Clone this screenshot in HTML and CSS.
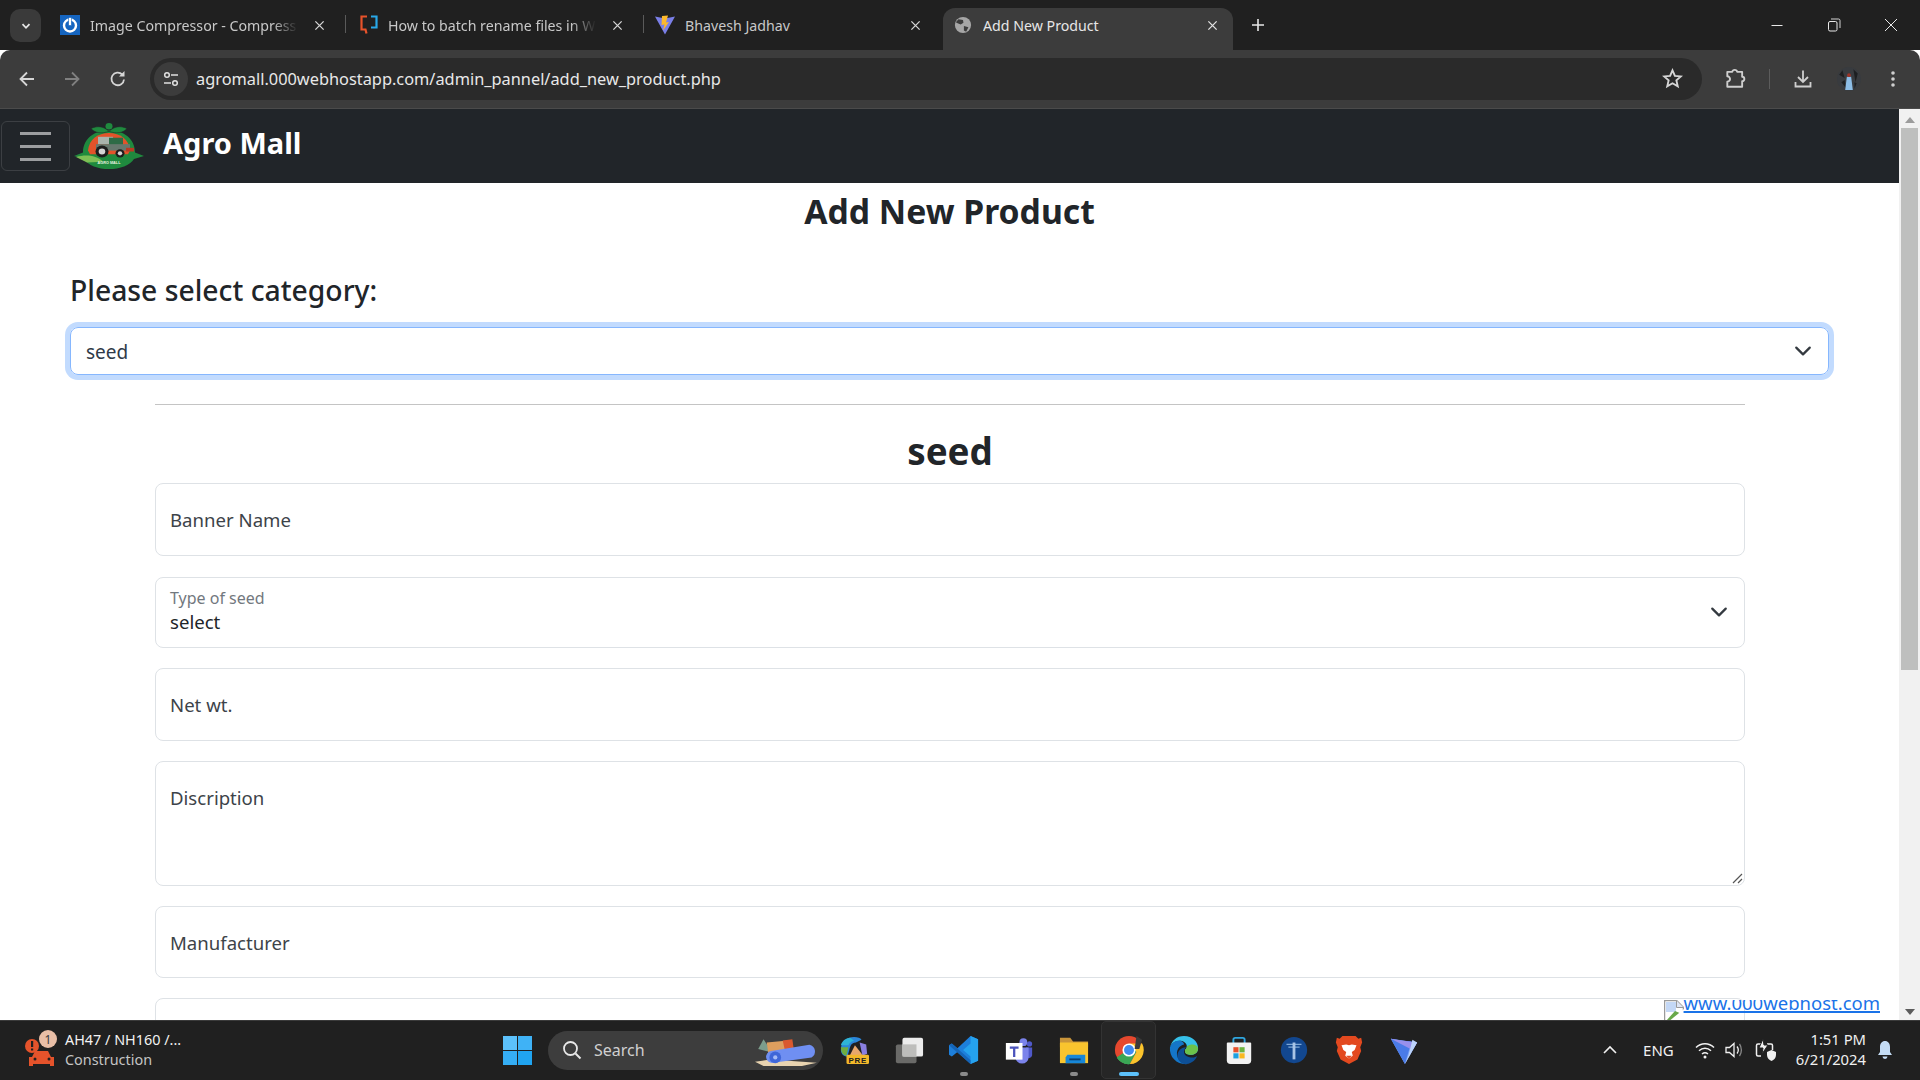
FILE: index.html
```html
<!DOCTYPE html>
<html lang="en">
<head>
<meta charset="utf-8">
<title>Add New Product</title>
<link rel="stylesheet" href="styles.css">
</head>
<body>
<div class="tabstrip">
  <div class="tablist-btn"><svg width="12" height="12" viewBox="0 0 12 12"><path d="M2.5 4.2 6 7.8l3.5-3.6" fill="none" stroke="#e6e6e6" stroke-width="1.8"/></svg></div>
  <div class="tab">
    <svg class="favicon" viewBox="0 0 20 20"><rect width="20" height="20" fill="#1565c0"/><circle cx="10" cy="10.5" r="6" fill="none" stroke="#fff" stroke-width="2.4"/><rect x="8.6" y="2.5" width="2.8" height="8" fill="#fff" stroke="#1565c0" stroke-width=".6"/></svg>
    <span class="tab-title">Image Compressor - Compress</span>
    <svg class="tab-close" viewBox="0 0 12 12"><path d="M1.5 1.5l9 9M10.5 1.5l-9 9" stroke="#d8d8d8" stroke-width="1.4"/></svg>
    <i class="tab-sep"></i>
  </div>
  <div class="tab tab-2">
    <svg class="favicon" viewBox="0 0 20 20"><path d="M8 1.5H2.5v13h4l1 4" fill="none" stroke="#e8532b" stroke-width="2.2"/><path d="M12 1.5h5.5v11H12" fill="none" stroke="#29a8e8" stroke-width="2.2"/></svg>
    <span class="tab-title">How to batch rename files in W</span>
    <svg class="tab-close" viewBox="0 0 12 12"><path d="M1.5 1.5l9 9M10.5 1.5l-9 9" stroke="#d8d8d8" stroke-width="1.4"/></svg>
    <i class="tab-sep"></i>
  </div>
  <div class="tab tab-3">
    <svg class="favicon" viewBox="0 0 20 20"><path d="M0 1.5l10 2 10-2L10 19.5z" fill="#7a7fe8"/><path d="M7 1l6-.5-2 7 3-.5-6 8.5 1.500-6-3 .5z" fill="#fdb92c"/></svg>
    <span class="tab-title">Bhavesh Jadhav</span>
    <svg class="tab-close" viewBox="0 0 12 12"><path d="M1.5 1.5l9 9M10.5 1.500l-9 9" stroke="#d8d8d8" stroke-width="1.4"/></svg>
  </div>
  <div class="tab tab-active">
    <svg class="favicon" viewBox="0 0 20 20"><circle cx="10" cy="10" r="9" fill="#a6a6a6"/><path d="M5 3.500l5 1 .5 3-3 2-3.500-1.500-2-1zM11 11l5 1.500-2.500 5-2.500-1.500z" fill="#3c3c3c"/></svg>
    <span class="tab-title">Add New Product</span>
    <svg class="tab-close" viewBox="0 0 12 12"><path d="M1.5 1.5l9 9M10.5 1.5l-9 9" stroke="#e4e4e4" stroke-width="1.4"/></svg>
  </div>
  <svg class="new-tab" viewBox="0 0 14 14"><path d="M7 1v12M1 7h12" stroke="#e6e6e6" stroke-width="1.6"/></svg>
  <div class="window-controls">
    <svg class="win-btn" viewBox="0 0 14 14"><path d="M1.500 7.500h11" stroke="#e8e8e8" stroke-width="1"/></svg>
    <svg class="win-btn" viewBox="0 0 14 14"><rect x="1.500" y="3.500" width="8.500" height="9.500" rx="1.500" fill="none" stroke="#e8e8e8"/><path d="M4 1h7.500a1.500 1.500 0 0 1 1.500 1.500V10" fill="none" stroke="#e8e8e8" stroke-width=".9"/></svg>
    <svg class="win-btn" viewBox="0 0 14 14"><path d="M1 1l12 12M13 1L1 13" stroke="#e8e8e8"/></svg>
  </div>
</div>

<div class="toolbar">
  <svg class="tb-icon tb-back" viewBox="0 0 20 20"><path d="M17 10H4M10 3.500 3.500 10l6.500 6.500" fill="none" stroke="#d6d6d6" stroke-width="1.800"/></svg>
  <svg class="tb-icon tb-forward" viewBox="0 0 20 20"><path d="M3 10h13M10 3.500l6.500 6.500-6.500 6.500" fill="none" stroke="#808080" stroke-width="1.800"/></svg>
  <svg class="tb-icon tb-reload" viewBox="0 0 20 20"><path d="M16 10.500a6.300 6.300 0 1 1-1.800-5" fill="none" stroke="#d6d6d6" stroke-width="1.800"/><path d="M16.500 2v5.500H11z" fill="#d6d6d6"/></svg>
  <div class="omnibox">
    <div class="site-chip"><svg width="18" height="18" viewBox="0 0 18 18"><circle cx="5" cy="5" r="2.300" fill="none" stroke="#e0e0e0" stroke-width="1.500"/><path d="M9 5h7M2 13h7" stroke="#e0e0e0" stroke-width="1.600"/><circle cx="13" cy="13" r="2.300" fill="none" stroke="#e0e0e0" stroke-width="1.500"/></svg></div>
    <span class="url">agromall.000webhostapp.com/admin_pannel/add_new_product.php</span>
    <svg class="star" viewBox="0 0 20 20"><path d="M10 2.200l2.300 5.300 5.700.5-4.300 3.800 1.300 5.600L10 14.500l-5 2.900 1.300-5.600L2 8l5.700-.5z" fill="none" stroke="#d6d6d6" stroke-width="1.800"/></svg>
  </div>
  <svg class="tb-icon tb-ext" viewBox="0 0 20 20"><path d="M3 3.500h4.500a2.300 2.300 0 0 1 4.500 0H16.500V8a2 2 0 0 1 0 4v5H3v-4.500a2.500 2.500 0 0 0 0-5z" fill="none" stroke="#cfcfcf" stroke-width="1.700" stroke-linejoin="round"/></svg>
  <i class="tb-sep"></i>
  <svg class="tb-icon tb-dl" viewBox="0 0 20 20"><path d="M10 1.500v11M5 8l5 5 5-5" fill="none" stroke="#cfcfcf" stroke-width="1.800"/><path d="M2.500 13v4.500h15V13" fill="none" stroke="#cfcfcf" stroke-width="1.800"/></svg>
  <svg class="avatar" viewBox="0 0 22 22"><circle cx="11" cy="11" r="11" fill="#383b3f"/><path d="M2 7l3-4 2 7zM15 2l4 4-2 8zM4 14l3-2 1 7zM16 14l2 1-2 5z" fill="#1d1f21"/><path d="M9 9h4l1.500 12h-7z" fill="#8cbde6"/><circle cx="11" cy="7.500" r="1.700" fill="#9c3328"/></svg>
  <svg class="tb-icon tb-menu" viewBox="0 0 20 20"><circle cx="10" cy="4" r="1.800" fill="#cfcfcf"/><circle cx="10" cy="10" r="1.800" fill="#cfcfcf"/><circle cx="10" cy="16" r="1.800" fill="#cfcfcf"/></svg>
</div>

<div class="viewport">
  <div class="page">
    <nav class="navbar">
      <div class="hamburger"><i></i><i></i><i></i></div>
      <svg class="logo" viewBox="0 0 70 50" preserveAspectRatio="none">
        <path d="M0 36 9 32C9 17 21 8 35 8s26 9 26 24l9 4-10 3C56 46 46 50 35 50S14 46 10 39z" fill="#1f8a3e"/>
        <path d="M35 9C29 3 23 3 17 6c4 5 11 6 18 3zM35 9c6-6 12-6 18-3-4 5-11 6-18 3z" fill="#1f8a3e" stroke="#212529" stroke-width=".6"/>
        <circle cx="35" cy="3.500" r="3.500" fill="#1f8a3e"/>
        <path d="M14 30C15 18 24 11 35 11s20 7 21 19l-2 4H16z" fill="#e2532a"/>
        <path d="M2 37c10-3 20-2 27 5l-16 1z" fill="#7dbf55"/>
        <rect x="24" y="15" width="15" height="8" fill="#a9b3ac"/>
        <rect x="35" y="16" width="14" height="10" fill="#2e6b46"/>
        <rect x="22" y="23" width="34" height="7" fill="#67786e"/>
        <rect x="52" y="27" width="8" height="4" fill="#b93a24"/>
        <circle cx="28" cy="31" r="6.500" fill="#1d1d1d"/><circle cx="28" cy="31" r="3.300" fill="#d4d4d4"/>
        <circle cx="46" cy="33" r="4.500" fill="#1d1d1d"/><circle cx="46" cy="33" r="2.200" fill="#d4d4d4"/>
        <text x="35" y="45" font-size="3.800" font-weight="700" fill="#e8f3e0" text-anchor="middle" font-family="Liberation Sans, sans-serif">AGRO MALL</text>
      </svg>
      <span class="brand">Agro Mall</span>
    </nav>
    <main class="content">
      <h2 class="page-title">Add New Product</h2>
      <h3 class="cat-label">Please select category:</h3>
      <div class="cat-select">
        <span>seed</span>
        <svg class="chev" viewBox="0 0 16 16"><path d="M2 5l6 6 6-6" fill="none" stroke="#343a40" stroke-width="2" stroke-linecap="round" stroke-linejoin="round"/></svg>
      </div>
      <hr class="rule">
      <form class="product-form">
        <h2 class="form-title">seed</h2>
        <div class="field">Banner Name</div>
        <div class="field field-select">
          <div class="field-select-text"><small>Type of seed</small><span>select</span></div>
          <svg class="chev" viewBox="0 0 16 16"><path d="M2 5l6 6 6-6" fill="none" stroke="#343a40" stroke-width="2" stroke-linecap="round" stroke-linejoin="round"/></svg>
        </div>
        <div class="field">Net wt.</div>
        <div class="field field-area">Discription
          <svg class="resizer" viewBox="0 0 12 12"><path d="M11 2 2 11M11 7l-4 4" stroke="#555" stroke-width="1.200"/></svg>
        </div>
        <div class="field field-short">Manufacturer</div>
        <div class="field"></div>
      </form>
    </main>
    <div class="host-badge">
      <svg class="broken" viewBox="0 0 20 22"><path d="M.5.5h12l7 7v14H.5z" fill="#fff" stroke="#9a9a9a" stroke-width="1.500"/><path d="M12.500.5v7h7" fill="#dfe6f5" stroke="#9a9a9a"/><path d="M2 2h10v10H2z" fill="#c4d8f6"/><path d="M2 21l9-10 7 3v7z" fill="#67a84a"/><path d="M4 22 20 9v13z" fill="#fff"/></svg>
      <a class="host-link" href="#">www.000webhost.com</a>
    </div>
  </div>
  <div class="scrollbar">
    <svg class="sb-arrow" viewBox="0 0 10 6"><path d="M5 0l5 6H0z" fill="#9c9c9c"/></svg>
    <div class="sb-track"><div class="sb-thumb"></div></div>
    <svg class="sb-arrow" viewBox="0 0 10 6"><path d="M5 6 0 0h10z" fill="#5c5c5c"/></svg>
  </div>
</div>

<footer class="taskbar">
  <div class="widget">
    <svg class="widget-icon" viewBox="0 0 34 38">
      <circle cx="7" cy="16" r="7" fill="#e5532b"/><rect x="6" y="11" width="2.200" height="6" fill="#202020"/><rect x="6" y="18.500" width="2.200" height="2" fill="#202020"/>
      <path d="M7 27l3-6h13l3 6h3v9h-4v-2H8v2H4v-9z" fill="#e5532b"/><circle cx="10" cy="29" r="1.500" fill="#202020"/><circle cx="24" cy="29" r="1.500" fill="#202020"/>
      <circle cx="23" cy="9" r="9" fill="#e9bea6"/><text x="23" y="13.500" font-size="12" fill="#3a3a3a" text-anchor="middle" font-family="Noto Sans, sans-serif">1</text>
    </svg>
    <div class="widget-text"><span class="w1">AH47 / NH160 /...</span><span class="w2">Construction</span></div>
  </div>
  <svg class="start" viewBox="0 0 29 29"><path d="M0 0h14v14H0z" fill="#5cc1fb"/><path d="M15 0h14v14H15z" fill="#3fb2f6"/><path d="M0 15h14v14H0z" fill="#35aef5"/><path d="M15 15h14v14H15z" fill="#20a4f0"/></svg>
  <div class="search">
    <svg class="search-glass" viewBox="0 0 20 20"><circle cx="8.500" cy="8.500" r="6.500" fill="none" stroke="#e8e8e8" stroke-width="1.800"/><path d="M13.500 13.500l5 5" stroke="#e8e8e8" stroke-width="2"/></svg>
    <span class="search-text">Search</span>
    <svg class="search-art" viewBox="0 0 60 30"><path d="M0 26l14-2 44 3-14 3H8z" fill="#e8d3b0"/><path d="M3 14l5-9 4 6 3 6z" fill="#7c9d8c"/><path d="M11 8l20-2 3 14-21 2z" fill="#dd9e5e"/><path d="M26 6l9-1 2 14-8 1z" fill="#d9582e"/><path d="M15 16 51 10a6.500 6.500 0 0 1 2 12l-36 5a5.500 5.500 0 0 1-2-11z" fill="#6f8ff2"/><circle cx="19" cy="22" r="5.500" fill="#3f66d8"/><circle cx="19" cy="22" r="2" fill="#a6bbf6"/></svg>
  </div>
  <div class="pinned">
    <div class="pin"><svg viewBox="0 0 32 32"><path d="M2 16C2 6 9 2 16 2c4 0 7 1 8 3l-6 3c-5 0-6 4-7 8l-2 7c-4 0-7-3-7-7z" fill="#2b86d9"/><path d="M2 11c1-4 5-8 10-8l4 3c-4 1-5 3-6 5z" fill="#2fb4d6"/><path d="M2 13h8l-2 9c-3 0-6-3-6-9z" fill="#6fae3f"/><path d="M22 8l7 2 1 10-5 2z" fill="#8a7fe0"/><path d="M11 23l6-12 8 10z" fill="#e8a86c"/><rect x="8" y="21" width="24" height="10" rx="1.500" fill="#f3b82a"/><text x="20" y="29.500" font-size="8.500" font-weight="700" fill="#202020" text-anchor="middle" font-family="Liberation Sans, sans-serif" letter-spacing=".8">PRE</text></svg></div>
    <div class="pin"><svg viewBox="0 0 32 32"><rect x="2" y="10" width="22" height="20" rx="2" fill="#6a6a68"/><rect x="9" y="3" width="22" height="20" rx="2" fill="#ececec"/><rect x="9" y="10" width="15" height="13" fill="#bdbdbb"/></svg></div>
    <div class="pin pin-open"><svg viewBox="0 0 32 32"><path d="M23 1l8 3.500v23L23 31 9 18l-6 5-3-2v-10l3-2 6 5z" fill="#1d7fdb"/><path d="M23 1l8 3.500v23L23 31zM23 9l-8 7 8 7z" fill="#25a2ee" fill-rule="evenodd"/><path d="M3 9l20 18v4L0 11z" fill="#1565b8"/></svg></div>
    <div class="pin"><svg class="teams" viewBox="0 0 32 32"><circle cx="21" cy="7" r="4.500" fill="#7b83eb"/><circle cx="28" cy="9" r="3" fill="#5059c9"/><path d="M24 13h7v9a4 4 0 0 1-7 2z" fill="#5059c9"/><path d="M12 13h15v11a7 7 0 0 1-15 0z" fill="#7b83eb"/><rect x="1" y="8" width="19" height="19" fill="#fff"/><path d="M5.500 12h10v2.500h-3.700V24H9.200v-9.500H5.500z" fill="#4b53bc"/></svg></div>
    <div class="pin pin-open"><svg viewBox="0 0 32 32"><path d="M1 3h11l3 4h16v6H1z" fill="#c9953a"/><path d="M1 8h30v22H1z" fill="#f9c42e"/><path d="M7 30v-6l2-3h19v9z" fill="#1787d8"/><path d="M11 25h12v2H11z" fill="#0b3f70"/></svg></div>
    <div class="pin pin-active"><svg viewBox="0 0 32 32"><circle cx="16" cy="16" r="15" fill="#e5482e"/><path d="M16 16 3 24a15 15 0 0 0 14 7z" fill="#3aa655"/><path d="M3 24a15 15 0 0 0 14 7l8-15 6-1a15 15 0 0 1 0 2l-1-2H16z" fill="#3aa655"/><path d="M16 9h14a15 15 0 0 1-13 22l7-13z" fill="#fbc42c"/><circle cx="16" cy="16" r="7" fill="#fff"/><circle cx="16" cy="16" r="5.300" fill="#3f8bf0"/><path d="M24 1l6 4-3 10h-5z" fill="#3a3a3a"/></svg></div>
    <div class="pin"><svg viewBox="0 0 32 32"><path d="M16 1c9 0 15 6 15 13 0 5-4 7-8 7-3 0-6-1-6-4 0-2 2-2 2-5 0-4-4-6-8-6-5 0-9 4-10 7C3 6 8 1 16 1z" fill="#36c0e9"/><path d="M31 14c0 5-4 7-8 7-3 0-6-1-6-4 0-2 2-2 2-5 5-3 11-2 12 2z" fill="#6cc24a"/><path d="M1 13C3 8 7 6 11 6c3 0 5 2 5 4-5 1-9 6-7 13 1 4 6 8 11 8C9 32 0 24 1 13z" fill="#1476c8"/><path d="M9 22c0-5 4-9 9-9-1 2-2 3-2 5 0 4 5 6 9 6 2 0 4-1 5-2-2 6-8 9-13 9-5-1-8-5-8-9z" fill="#0d4f96"/></svg></div>
    <div class="pin"><svg viewBox="0 0 32 32"><path d="M10 9V5a2 2 0 0 1 2-2h8a2 2 0 0 1 2 2v4" fill="none" stroke="#2fa6df" stroke-width="2"/><path d="M4 8h24a1 1 0 0 1 1 1v18a4 4 0 0 1-4 4H7a4 4 0 0 1-4-4V9a1 1 0 0 1 1-1z" fill="#f2f2f2"/><rect x="10" y="13" width="5.500" height="5.500" fill="#e6522c"/><rect x="16.500" y="13" width="5.500" height="5.500" fill="#6cb33f"/><rect x="10" y="19.500" width="5.500" height="5.500" fill="#1ba1e2"/><rect x="16.500" y="19.500" width="5.500" height="5.500" fill="#f8b81f"/></svg></div>
    <div class="pin"><svg viewBox="0 0 32 32"><circle cx="16" cy="16" r="14" fill="#12478f"/><path d="M8 10h16M10 13h12" stroke="#7fa9d6" stroke-width="1.300"/><path d="M14.500 8h3v18h-3z" fill="#a8c4e6"/></svg></div>
    <div class="pin"><svg viewBox="0 0 32 32"><path d="M9 1h14l3 3 3-1 1 5-2 5 1 4-4 9-9 5-9-5-4-9 1-4-2-5 1-5 3 1z" fill="#e3491f"/><path d="M8 11l5-1 3 1 3-1 5 1-2 5-3 2 1 4-4 3-4-3 1-4-3-2z" fill="#fff"/><path d="M13 22h6l-3 3z" fill="#e3491f"/></svg></div>
    <div class="pin"><svg viewBox="0 0 32 32"><path d="M2 4 30 8 17 31z" fill="#7da4f5"/><path d="M2 4 14 6l10 1-7 24z" fill="#4a7be8"/><path d="M2 4l13 2 15 2-5 8z" fill="#9890ec"/><path d="M25 5l5 3-13 23 4-10z" fill="#bcd3fb"/></svg></div>
  </div>
  <div class="tray">
    <svg class="tray-chev" viewBox="0 0 14 10"><path d="M1 8l6-6 6 6" fill="none" stroke="#f0f0f0" stroke-width="1.600"/></svg>
    <span class="lang">ENG</span>
    <svg class="tray-ic tray-wifi" viewBox="0 0 20 18"><path d="M1 6.500C6 1.500 14 1.500 19 6.500M4 9.800c3.500-3.300 8.500-3.300 12 0M7 13c1.800-1.500 4.200-1.500 6 0" fill="none" stroke="#f0f0f0" stroke-width="1.500"/><circle cx="10" cy="16" r="1.500" fill="#f0f0f0"/></svg>
    <svg class="tray-ic tray-vol" viewBox="0 0 18 18"><path d="M1 6.500h3.500L9 2.500v13l-4.500-4H1z" fill="none" stroke="#f0f0f0" stroke-width="1.300"/><path d="M12 5.500c1.500 2 1.500 5 0 7" fill="none" stroke="#f0f0f0" stroke-width="1.300"/><path d="M14.500 3c2.500 3.500 2.500 8.500 0 12" fill="none" stroke="#888" stroke-width="1.300"/></svg>
    <svg class="tray-ic tray-bat" viewBox="0 0 22 22"><path d="M6 5H3a1.500 1.500 0 0 0-1.500 1.500v9A1.500 1.500 0 0 0 3 17h3M12 5h4a1.500 1.500 0 0 1 1.500 1.500V11" fill="none" stroke="#f0f0f0" stroke-width="1.500"/><path d="M8 0 4 9h4l-1 6 6-9H9z" fill="#f0f0f0" stroke="#202020"/><path d="M12 13l4.500-2 4.500 2v3c0 3-2 5-4.500 6-2.500-1-4.500-3-4.500-6z" fill="#f0f0f0"/></svg>
    <div class="clock"><span>1:51 PM</span><span>6/21/2024</span></div>
    <svg class="bell" viewBox="0 0 14 20"><path d="M7 1c3 0 5 2.500 5 6v5l2 3H0l2-3V7c0-3.500 2-6 5-6z" fill="#c4dcf5"/><path d="M4.500 16.500h5a2.500 2.500 0 0 1-5 0z" fill="#c4dcf5"/></svg>
  </div>
</footer>
</body>
</html>
```

FILE: styles.css
```css
* { box-sizing: border-box; }
html, body { margin: 0; height: 100%; overflow: hidden; }
body {
  display: flex;
  flex-direction: column;
  height: 1080px;
  background: #fff;
  font-family: "Noto Sans", "Open Sans", sans-serif;
  color: #212529;
}

/* browser tab strip */
.tabstrip {
  display: flex;
  align-items: flex-start;
  height: 50px;
  padding: 8px 0 0 10px;
  background: #202020;
  flex: none;
}
.tablist-btn {
  width: 31px;
  height: 33px;
  margin: 1px 7px 0 0;
  border-radius: 10px;
  background: #3a3a3a;
  display: flex;
  align-items: center;
  justify-content: center;
}
.tab {
  position: relative;
  display: flex;
  align-items: center;
  width: 298px;
  height: 42px;
  padding: 0 21px 8px 12px;
  color: #c8c8c8;
  font-size: 14.200px;
}
.tab-2 { padding-left: 13px; }
.tab-2 .favicon { margin-right: 9px; }
.tab-3 { padding-left: 11px; }
.favicon { width: 20px; height: 20px; flex: none; margin-right: 10px; }
.tab-title {
  flex: 1;
  white-space: nowrap;
  overflow: hidden;
  margin-right: 16px;
  -webkit-mask-image: linear-gradient(to right, #000 88%, transparent 100%);
  mask-image: linear-gradient(to right, #000 88%, transparent 100%);
}
.tab-3 .tab-title, .tab-active .tab-title { -webkit-mask-image: none; mask-image: none; }
.tab-close { width: 11px; height: 11px; flex: none; }
.tab-sep {
  position: absolute;
  right: 0;
  top: 7px;
  width: 1px;
  height: 18px;
  background: #5a5a5a;
}
.tab-active {
  width: 290px;
  margin-left: 1px;
  padding-left: 11px;
  padding-right: 15px;
  background: #3c3c3c;
  border-radius: 12px 12px 0 0;
  color: #e6e6e6;
}
.tab-active .favicon { width: 18px; height: 18px; margin-right: 11px; }
.new-tab { width: 14px; height: 14px; margin: 10px 0 0 18px; flex: none; }
.window-controls {
  margin-left: auto;
  display: flex;
  gap: 43px;
  padding: 10px 22px 0 0;
}
.win-btn { width: 14px; height: 14px; }

/* browser toolbar */
.toolbar {
  display: flex;
  align-items: center;
  height: 59px;
  padding: 0 17px 1px 17px;
  background: #3c3c3c;
  border-bottom: 1px solid #4b4b4b;
  border-radius: 10px 10px 0 0;
  flex: none;
}
.tb-icon { width: 20px; height: 20px; flex: none; }
.tb-forward { margin-left: 25px; }
.tb-reload { margin-left: 26px; }
.omnibox {
  display: flex;
  align-items: center;
  width: 1552px;
  height: 42px;
  margin-left: 22px;
  padding: 0 19px 0 4px;
  border-radius: 21px;
  background: #2a2a2a;
  flex: none;
}
.site-chip {
  width: 34px;
  height: 34px;
  border-radius: 50%;
  background: #3c3c3c;
  display: flex;
  align-items: center;
  justify-content: center;
  flex: none;
}
.url { margin: 1px 0 0 8px; font-size: 16.350px; color: #e8e8e8; flex: 1; white-space: nowrap; }
.star { width: 21px; height: 21px; flex: none; }
.tb-ext { width: 22px; height: 22px; margin-left: 22px; }
.tb-sep { width: 1px; height: 20px; background: #5c5c5c; margin-left: 23px; flex: none; }
.tb-dl { margin-left: 23px; }
.avatar { width: 24px; height: 24px; margin-left: 24px; flex: none; }
.tb-menu { margin-left: 22px; }

/* page viewport */
.viewport { flex: 1; min-height: 0; display: flex; }
.page { position: relative; flex: 1; min-width: 0; overflow: hidden; }
.navbar {
  display: flex;
  align-items: center;
  height: 74px;
  padding-left: 1px;
  background: #212529;
}
.hamburger {
  width: 69px;
  height: 50px;
  border: 1px solid rgba(255,255,255,.12);
  border-radius: 6px;
  display: flex;
  flex-direction: column;
  justify-content: center;
  align-items: center;
  gap: 10px;
}
.hamburger i { display: block; width: 31px; height: 3px; background: #9c9ea0; }
.logo { width: 70px; height: 46px; margin: -1px 0 0 4px; flex: none; }
.brand { margin: -8px 0 0 19px; color: #fff; font-size: 29px; font-weight: 700; }

.content { padding: 0 70px; }
.page-title { margin: 0; padding-top: 5px; text-align: center; font-size: 33.700px; line-height: 46px; font-weight: 700; }
.cat-label { margin: 36px 0 0; font-size: 28.300px; line-height: 40px; font-weight: 500; }
.cat-select {
  display: flex;
  align-items: center;
  justify-content: space-between;
  height: 48px;
  margin-top: 17px;
  padding: 0 16px 0 15px;
  border: 1px solid #86b7fe;
  border-radius: 8px;
  box-shadow: 0 0 0 5px #c2dbfe;
  font-size: 19px;
  color: #2f3a48;
}
.cat-select span { margin-top: 2px; }
.chev { width: 18px; height: 18px; flex: none; }
.rule { height: 1px; margin: 29px 84px 0 85px; border: 0; background: #c4c4c4; }

.product-form { display: flex; flex-direction: column; gap: 20px; margin: 0 84px 0 85px; }
.form-title { margin: 20px 0 -14px; text-align: center; font-size: 36.800px; line-height: 52px; font-weight: 700; }
.field {
  position: relative;
  flex: none;
  display: flex;
  align-items: center;
  height: 73px;
  padding: 0 15px 0 14px;
  border: 1px solid #dee2e6;
  border-radius: 8px;
  font-size: 18.600px;
  color: #3d4349;
  background: #fff;
}
.field-select { justify-content: space-between; padding-right: 16px; height: 71px; margin-top: 1px; }
.field-select-text { display: flex; flex-direction: column; margin-top: -3px; }
.field-select .chev { margin-top: -2px; }
.field-select-text small { font-size: 16px; line-height: 22px; color: #72787e; }
.field-select-text span { font-size: 18.600px; line-height: 26px; color: #212529; }
.field-area { align-items: flex-start; height: 125px; padding-top: 22px; line-height: 28px; }
.field-short { height: 72px; }
.resizer { position: absolute; right: 1px; bottom: 1px; width: 12px; height: 12px; }

.host-badge {
  position: absolute;
  right: 19px;
  bottom: 0;
  display: flex;
  align-items: flex-start;
  height: 20px;
  overflow: hidden;
}
.broken { width: 20px; height: 22px; flex: none; }
.host-link { margin-top: -10px; font-size: 18.500px; line-height: 25px; color: #1a73e8; text-decoration: underline; text-decoration-thickness: 2px; }

.scrollbar {
  width: 21px;
  flex: none;
  background: #f1f1f1;
  display: flex;
  flex-direction: column;
  align-items: center;
  padding: 8px 0 5px;
}
.sb-arrow { width: 10px; height: 6px; flex: none; }
.sb-track { flex: 1; width: 100%; padding: 5px 2px; }
.sb-thumb { height: 542px; background: #bebfbe; }

/* windows taskbar */
.taskbar {
  display: flex;
  align-items: center;
  height: 60px;
  padding: 0 0 1px 25px;
  background: #202020;
  border-top: 1px solid #3a3a3a;
  flex: none;
}
.widget { display: flex; align-items: center; width: 478px; }
.widget-icon { width: 34px; height: 38px; flex: none; margin-top: -2px; }
.widget-text { display: flex; flex-direction: column; margin: 0 0 0 6px; }
.w1 { font-size: 14.400px; line-height: 20px; color: #f2f2f2; }
.w2 { font-size: 14.400px; line-height: 20px; color: #c4c4c4; }
.start { width: 29px; height: 29px; flex: none; }
.search {
  display: flex;
  align-items: center;
  width: 275px;
  height: 39px;
  margin-left: 16px;
  padding: 0 4px 0 14px;
  border-radius: 20px;
  background: #3d3d3d;
  flex: none;
}
.search-glass { width: 20px; height: 20px; flex: none; }
.search-text { margin-left: 12px; font-size: 16px; color: #d0d0d0; flex: 1; }
.search-art { width: 64px; height: 32px; flex: none; }
.pinned { display: flex; margin-left: 3px; height: 100%; }
.pin {
  position: relative;
  width: 55px;
  display: flex;
  align-items: center;
  justify-content: center;
}
.pin svg { width: 30px; height: 30px; }
.pin svg.teams { width: 28px; height: 28px; }
.pin-open::after {
  content: "";
  position: absolute;
  bottom: 3px;
  width: 8px;
  height: 4px;
  border-radius: 2px;
  background: #8a8a8a;
}
.pin-active { background: #262626; border: 1px solid #333; border-radius: 5px; }
.pin-active::after {
  content: "";
  position: absolute;
  bottom: 2px;
  width: 20px;
  height: 4px;
  border-radius: 2px;
  background: #5cc1fb;
}
.tray { margin-left: auto; display: flex; align-items: center; padding-right: 28px; }
.tray-chev { width: 14px; height: 10px; flex: none; }
.lang { margin-left: 26px; font-size: 15px; color: #f0f0f0; }
.tray-ic { flex: none; }
.tray-wifi { width: 20px; height: 18px; margin-left: 21px; }
.tray-vol { width: 18px; height: 18px; margin-left: 10px; }
.tray-bat { width: 22px; height: 22px; margin-left: 12px; }
.clock { display: flex; flex-direction: column; align-items: flex-end; margin: -2px 0 0 19px; font-size: 14.800px; line-height: 20px; color: #f0f0f0; }
.bell { width: 14px; height: 20px; margin-left: 12px; flex: none; }
```
